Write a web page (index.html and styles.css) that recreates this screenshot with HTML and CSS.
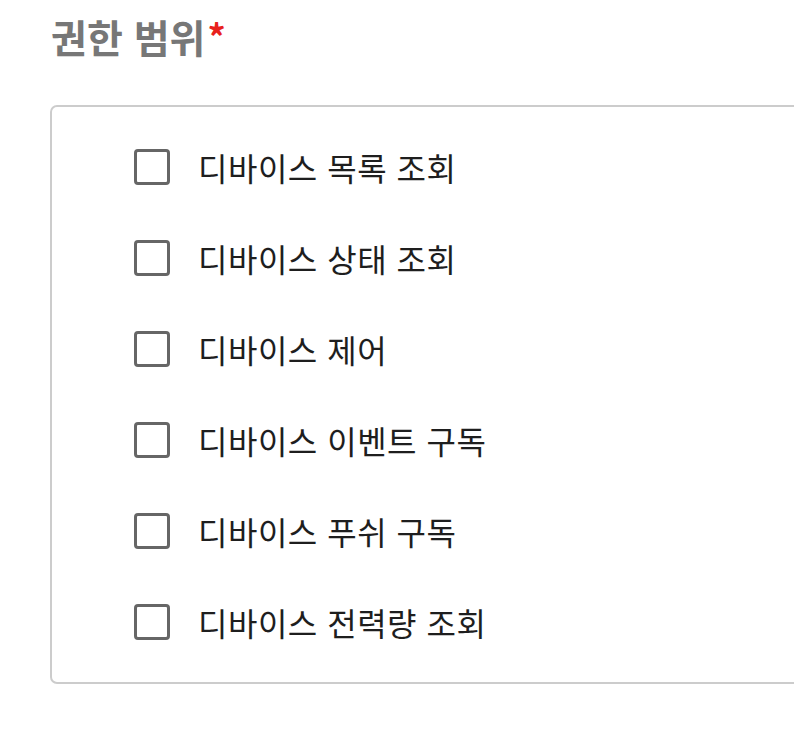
FILE: index.html
```html
<!DOCTYPE html>
<html lang="ko">
<head>
<meta charset="utf-8">
<link rel="stylesheet" href="styles.css">
</head>
<body>
<div class="page">
  <h2 class="title">권한 범위<span class="req">*</span></h2>
  <div class="box">
    <label class="row"><span class="cb"></span><span class="txt">디바이스 목록 조회</span></label>
    <label class="row"><span class="cb"></span><span class="txt">디바이스 상태 조회</span></label>
    <label class="row"><span class="cb"></span><span class="txt">디바이스 제어</span></label>
    <label class="row"><span class="cb"></span><span class="txt">디바이스 이벤트 구독</span></label>
    <label class="row"><span class="cb"></span><span class="txt">디바이스 푸쉬 구독</span></label>
    <label class="row"><span class="cb"></span><span class="txt">디바이스 전력량 조회</span></label>
  </div>
</div>
</body>
</html>
```
FILE: styles.css
```css
html, body {
  margin: 0;
  padding: 0;
  overflow: hidden;
  background: #fff;
}
.page {
  padding: 9px 0 0 50px;
  font-family: "Noto Sans CJK KR", "Noto Sans", sans-serif;
  width: 800px;
}
.title {
  margin: 0 0 43px 1px;
  font-size: 39px;
  line-height: 52px;
  font-weight: 700;
  color: #777;
}
.req {
  color: #e8211d;
  font-size: 36px;
  vertical-align: 2px;
  margin-left: 2px;
}
.box {
  border: 2px solid #cccccc;
  border-radius: 7px;
  padding: 42px 0 42px 82px;
  display: flex;
  flex-direction: column;
  gap: 55px;
}
.row {
  display: flex;
  align-items: center;
  height: 36px;
}
.cb {
  box-sizing: border-box;
  width: 36px;
  height: 36px;
  border: 3px solid #666;
  border-radius: 4px;
  flex: none;
}
.txt {
  margin-left: 28px;
  font-size: 32px;
  letter-spacing: 0.5px;
  color: #1e1e1e;
  line-height: 34px;
}
```
